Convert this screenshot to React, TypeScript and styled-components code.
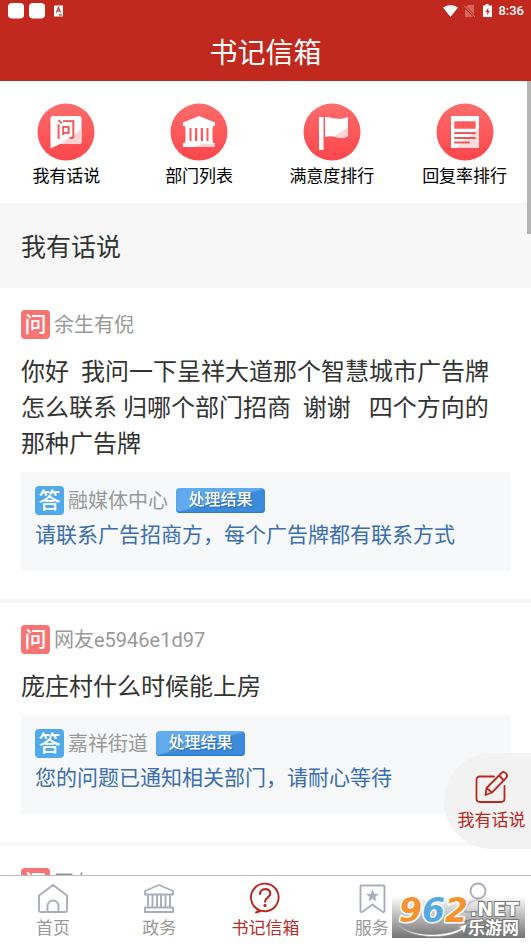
import React from "react";
import styled, { createGlobalStyle } from "styled-components";

const GlobalStyle = createGlobalStyle`
  *, *::before, *::after { box-sizing: border-box; }
  body {
    margin: 0;
    background: #fff;
    font-family: Roboto, "Noto Sans CJK SC", sans-serif;
    color: #333;
  }
  button { font: inherit; color: inherit; border: 0; background: none; padding: 0; cursor: pointer; }
  h1, h2, p, ul { margin: 0; padding: 0; font-weight: 400; }
  ul { list-style: none; }
`;

const Screen = styled.div`
  display: flex;
  flex-direction: column;
  height: 100vh;
  padding-bottom: 6px;
  position: relative;
  overflow: hidden;
`;

const Header = styled.header`
  flex: none;
  background: #c1291e;
  color: #fff;
`;

const StatusBar = styled.div`
  display: flex;
  align-items: center;
  justify-content: space-between;
  height: 22px;
  padding: 0 7px 0 8px;
  font-size: 13px;
  line-height: 22px;
  font-weight: 500;
`;

const StatusGroup = styled.div`
  display: flex;
  align-items: center;
  gap: 5px;
`;

const Title = styled.h1`
  padding: 12px 0 7px;
  font-size: 28px;
  line-height: 40px;
  text-align: center;
`;

const Main = styled.main`
  flex: 1;
  min-height: 0;
  overflow: hidden;
  position: relative;
`;

const ScrollThumb = styled.div`
  position: absolute;
  top: 0;
  right: 0;
  width: 4px;
  height: 153px;
  background: #b4b4b4;
`;

const Shortcuts = styled.nav`
  display: grid;
  grid-template-columns: repeat(4, 1fr);
  padding: 22px 0 14px;
`;

const Shortcut = styled.button`
  display: flex;
  flex-direction: column;
  align-items: center;
  color: #000;
  font-size: 17px;
  line-height: 26px;
  gap: 2px;
`;

const SectionTitle = styled.h2`
  background: #f7f7f7;
  padding: 27px 21px 22px;
  font-size: 25px;
  line-height: 36px;
`;

const Card = styled.li`
  padding: 22px 21px 28px;
  border-bottom: 4px solid #f7f7f7;
`;

const Person = styled.div`
  display: flex;
  align-items: flex-start;
  gap: 4px;
  height: 29px;
  font-size: 20px;
  line-height: 30px;
  color: #999;
  white-space: nowrap;
`;

const Mark = styled.span<{ $tone: string }>`
  display: flex;
  align-items: center;
  justify-content: center;
  width: 29px;
  height: 29px;
  border-radius: 4px;
  background: ${(p) => p.$tone};
  color: #fff;
  font-size: 22px;
  font-weight: 500;
  line-height: 28px;
`;

const Question = styled.p`
  margin: 15px 0 10px;
  font-size: 24px;
  line-height: 36px;
  white-space: pre-wrap;
`;

const Reply = styled.div`
  padding: 14px 14px 20px;
  background: #f6f8fa;
`;

const ReplyText = styled.p`
  margin-top: 4px;
  font-size: 21px;
  line-height: 32px;
  color: #3a6eb0;
`;

const ResultBadge = styled.span`
  align-self: center;
  margin-left: 4px;
  width: 89px;
  height: 25px;
  border-radius: 4px;
  background: linear-gradient(165deg, #62aaee 0 48%, #3a8bdb 52% 100%);
  box-shadow: inset 0 -1px 1px #2f78c8;
  color: #fff;
  font-size: 16px;
  font-weight: 500;
  line-height: 24px;
  text-align: center;
  text-shadow: 1px 1px 1px #2869ad;
`;

const FloatingButton = styled.button`
  position: absolute;
  right: 0;
  bottom: 95px;
  width: 87px;
  height: 96px;
  border-radius: 48px 0 0 48px;
  background: #f2f2f2;
  color: #b9291f;
  display: flex;
  flex-direction: column;
  align-items: center;
  padding: 18px 0 0 8px;
  gap: 2px;
  font-size: 17px;
  line-height: 26px;
`;

const TabBar = styled.nav`
  flex: none;
  display: grid;
  grid-template-columns: repeat(5, 1fr);
  border-top: 1px solid #bdbdbd;
  background: #fff;
`;

const Tab = styled.button<{ $active?: boolean }>`
  display: flex;
  flex-direction: column;
  align-items: center;
  gap: 3px;
  padding-top: 5px;
  font-size: 17px;
  line-height: 20px;
  color: ${(p) => (p.$active ? "#b9291f" : "#999")};
`;

const Watermark = styled.div`
  position: absolute;
  right: 6px;
  bottom: 6px;
  width: 133px;
  height: 42px;
  pointer-events: none;
  background: linear-gradient(rgba(255, 255, 255, 0), rgba(100, 100, 100, 0.9));
  svg { display: block; overflow: visible; }
`;

type ShortcutKind = "ask" | "hall" | "flag" | "list";

const ShortcutIcon = ({ kind }: { kind: ShortcutKind }) => (
  <svg width="58" height="58" viewBox="0 0 58 58" aria-hidden="true">
    <defs>
      <linearGradient id={`disc-${kind}`} x1="0" y1="0" x2="0" y2="1">
        <stop offset="0" stopColor="#fe6c6c" />
        <stop offset="1" stopColor="#fe464b" />
      </linearGradient>
    </defs>
    <circle cx="29" cy="29" r="28.500" fill={`url(#disc-${kind})`} />
    {kind === "ask" && (
      <g>
        <path d="M16 13h26q2.500 0 2.500 2.500v23q0 2.500-2.500 2.500H23l-9.500 4.500v-30Q13.500 13 16 13z" fill="#fff" />
        <path d="M44.500 26v12.500q0 2.500-2.500 2.500H23z" fill="#ffd3d4" />
        <text x="29" y="34" fontSize="20" fontWeight="500" fill="#ee5759" textAnchor="middle">问</text>
      </g>
    )}
    {kind === "hall" && (
      <g fill="#fff">
        <path d="M29 13 45 19.500V23H13v-3.500zM15 23h28v2H15z" />
        <path d="M15.500 24h4v15h-4zM21.500 24h3.500v15h-3.500zM27.300 24h3.500v15h-3.500zM33 24h3.500v15H33zM38.500 24h4v15h-4z" />
        <path d="M15 38h28v2h2v4H13v-4h2z" />
        <path d="M32 41h13v3H24z" fill="#ffd3d4" />
      </g>
    )}
    {kind === "flag" && (
      <g>
        <path d="M16 14h4.500v33H16zM22 14c8 0 12 4 23 0v19c-9 5-13-2-23 1z" fill="#fff" />
        <path d="M45 24v9c-5 3-9 2-13 0z" fill="#ffd3d4" />
      </g>
    )}
    {kind === "list" && (
      <g>
        <path d="M15 13h28v32H15z" fill="#fff" />
        <path d="M43 25v20H20z" fill="#ffdcdc" />
        <path d="M19 19h20v6H19z" fill="#fe5c5f" stroke="#fe5c5f" strokeWidth="1.500" strokeLinejoin="round" />
        <path d="M19 30h20M19 35h20M19 39.500h14" stroke="#ee5759" strokeWidth="2" strokeLinecap="round" />
      </g>
    )}
  </svg>
);

type TabKind = "home" | "gov" | "mail" | "service" | "me";

const TabIcon = ({ kind }: { kind: TabKind }) => (
  <svg
    width="34"
    height="34"
    viewBox="0 0 34 34"
    fill="none"
    stroke={kind === "mail" ? "#b9291f" : "#a9adbe"}
    strokeWidth="1.900"
    strokeLinecap="round"
    strokeLinejoin="round"
    aria-hidden="true"
  >
    {kind === "home" && (
      <path d="M3 14.500 17 4l14 10.500V29.500q0 1.500-1.500 1.500h-25Q3 31 3 29.500zM11.500 31v-6a5.500 5.500 0 0 1 11 0v6" />
    )}
    {kind === "gov" && (
      <path d="M17 4 31 10v3.500H3V10zM6 13.500V26M28 13.500V26M10.500 14v12M15 14v12M19 14v12M23.500 14v12M3 26.500h28V31H3z" />
    )}
    {kind === "mail" && (
      <g>
        <path d="M11.500 29.200a13.800 13.800 0 1 1 6.500 1q-2.500.2-4.500-.5L8 31.500l3.500-2.300" />
        <path d="M12 13c0-6.500 10.300-6.400 10.300-.4 0 4-5.200 4-5.200 8" strokeWidth="2.200" />
        <circle cx="17" cy="24.500" r=".7" fill="#b9291f" />
      </g>
    )}
    {kind === "service" && (
      <g>
        <path d="M5.500 4.500h23q1 0 1 1v24.700q-.6 1.400-1.800.8L17.500 23.500 7.300 31q-1.200.6-1.800-.8V5.500q0-1 1-1z" />
        <path d="m17.500 9 1.500 4 4.200.2-3.300 2.600 1.200 4.100-3.600-2.300-3.600 2.300 1.200-4.100-3.300-2.600L16 13z" fill="#a9adbe" strokeWidth=".6" />
      </g>
    )}
    {kind === "me" && (
      <g>
        <circle cx="17" cy="10" r="7.500" />
        <path d="M4 31c1-7 6-12 13-12s12 5 13 12z" strokeOpacity=".5" />
      </g>
    )}
  </svg>
);

const shortcuts: { kind: ShortcutKind; label: string }[] = [
  { kind: "ask", label: "我有话说" },
  { kind: "hall", label: "部门列表" },
  { kind: "flag", label: "满意度排行" },
  { kind: "list", label: "回复率排行" },
];

const letters = [
  {
    author: "余生有倪",
    question: "你好  我问一下呈祥大道那个智慧城市广告牌怎么联系 归哪个部门招商  谢谢   四个方向的那种广告牌",
    office: "融媒体中心",
    reply: "请联系广告招商方，每个广告牌都有联系方式",
  },
  {
    author: "网友e5946e1d97",
    question: "庞庄村什么时候能上房",
    office: "嘉祥街道",
    reply: "您的问题已通知相关部门，请耐心等待",
  },
];

const tabs: { kind: TabKind; label: string }[] = [
  { kind: "home", label: "首页" },
  { kind: "gov", label: "政务" },
  { kind: "mail", label: "书记信箱" },
  { kind: "service", label: "服务" },
  { kind: "me", label: "我的" },
];

const AppIndicators = () => (
  <svg width="56" height="18" viewBox="0 0 56 18" aria-hidden="true">
    <rect x="0" y="1" width="16" height="15.500" rx="4" fill="#fff" />
    <rect x="21" y="1" width="16" height="15.500" rx="4" fill="#fff" />
    <rect x="46" y="3.500" width="9" height="11" rx=".5" fill="#fff" />
    <path d="m48.500 10.500 2-5 2 5M49.300 9h2.500M51 12.800h3" fill="none" stroke="#b5342b" strokeWidth="1.200" />
  </svg>
);

const DeviceIndicators = () => (
  <svg width="50" height="14" viewBox="0 0 50 14" aria-hidden="true">
    <path d="M0 3.500Q7.500-1.500 15 3.500L7.500 13z" fill="#fff" />
    <path d="M25 1h6v12h-9V4z" fill="#d9665d" />
    <path d="m21 2 11 11" stroke="#c1291e" strokeWidth="2.500" />
    <path d="m21 1.500 11 11.500" stroke="#e0857e" />
    <path d="M42.500 1.500V0h3v1.500H49V13h-9V1.500z" fill="#fff" />
    <path d="M45.500 3.500 42.500 8h2l-.7 3.500L47 6.800h-2z" fill="#c1291e" />
  </svg>
);

export default function App() {
  return (
    <>
      <GlobalStyle />
      <Screen>
        <Header>
          <StatusBar>
            <StatusGroup>
              <AppIndicators />
            </StatusGroup>
            <StatusGroup>
              <DeviceIndicators />
              <span>8:36</span>
            </StatusGroup>
          </StatusBar>
          <Title>书记信箱</Title>
        </Header>

        <Main>
          <Shortcuts>
            {shortcuts.map((s) => (
              <Shortcut key={s.kind} type="button">
                <ShortcutIcon kind={s.kind} />
                {s.label}
              </Shortcut>
            ))}
          </Shortcuts>
          <SectionTitle>我有话说</SectionTitle>
          <ul>
            {letters.map((l) => (
              <Card key={l.author}>
                <Person>
                  <Mark $tone="#f77473">问</Mark>
                  {l.author}
                </Person>
                <Question>{l.question}</Question>
                <Reply>
                  <Person>
                    <Mark $tone="#50a9e8">答</Mark>
                    {l.office}
                    <ResultBadge>处理结果</ResultBadge>
                  </Person>
                  <ReplyText>{l.reply}</ReplyText>
                </Reply>
              </Card>
            ))}
            <Card>
              <Person>
                <Mark $tone="#f77473">问</Mark>
                网友bd
              </Person>
            </Card>
          </ul>
          <ScrollThumb />
        </Main>

        <TabBar>
          {tabs.map((t) => (
            <Tab key={t.kind} type="button" $active={t.kind === "mail"}>
              <TabIcon kind={t.kind} />
              {t.label}
            </Tab>
          ))}
        </TabBar>

        <FloatingButton type="button">
          <svg width="34" height="34" viewBox="0 0 34 34" fill="none" stroke="#b9291f" strokeWidth="1.800" strokeLinejoin="round" strokeLinecap="round" aria-hidden="true">
            <path d="M19 5.500H5Q1.500 5.500 1.500 9v18.500q0 3.500 3.500 3.500h21q3.500 0 3.500-3.500V15" />
            <path d="m10.500 24 1-7L26.500 2q2-2 4.500.3 2.200 2.500.2 4.500L17 21.500zM24 4.500l5 5M11.500 17l5.500 4.500" />
          </svg>
          我有话说
        </FloatingButton>

        <Watermark>
          <svg width="133" height="42" viewBox="0 0 133 42" fontFamily="DejaVu Sans, Noto Sans CJK SC, sans-serif" fontWeight="700">
            <path d="M5 27c12 15 50 14 64 5l-3-1 9-3-3 9-2-3C52 45 15 42 5 27z" fill="#fff" stroke="#999" strokeWidth=".6" />
            <g fontSize="33" fontStyle="italic" stroke="#fff" strokeWidth="3" paintOrder="stroke" strokeLinejoin="round">
              <text x="7" y="26" fill="#f59331">9</text>
              <text x="30" y="26" fill="#55a9e2">6</text>
              <text x="53" y="26" fill="#f59331">2</text>
            </g>
            <g fill="#fff" stroke="#777" strokeWidth="2" paintOrder="stroke">
              <text x="78" y="20" fontSize="19">.NET</text>
              <text x="76" y="38" fontSize="17">乐游网</text>
            </g>
          </svg>
        </Watermark>
      </Screen>
    </>
  );
}
